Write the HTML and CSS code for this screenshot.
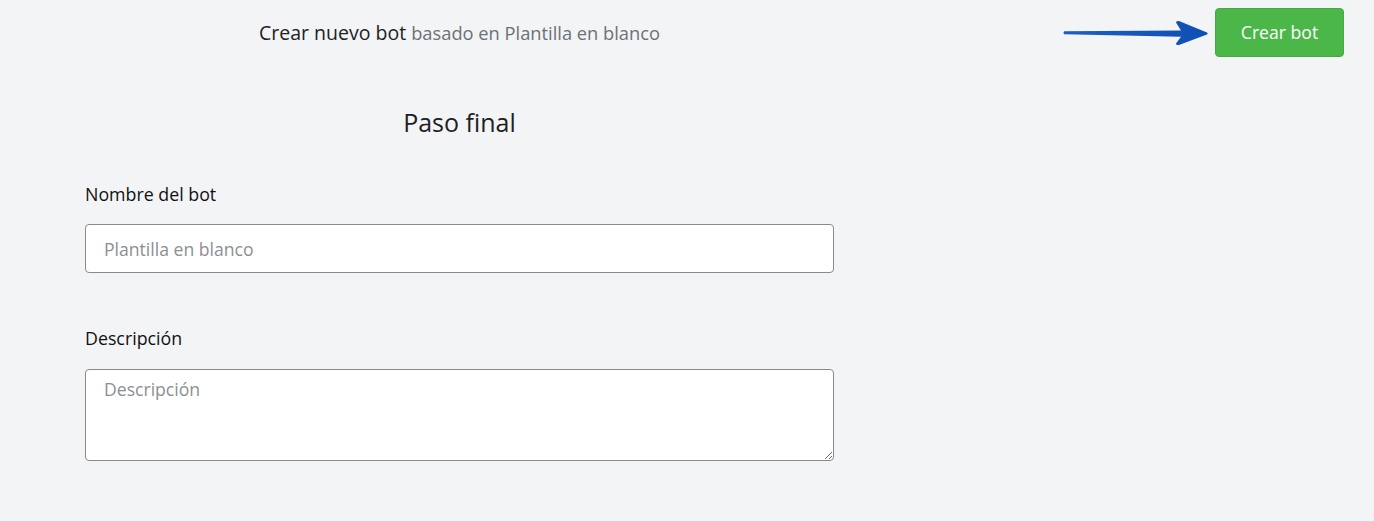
FILE: index.html
```html
<!DOCTYPE html>
<html lang="es">
<head>
<meta charset="utf-8">
<title>Crear nuevo bot</title>
<link rel="stylesheet" href="styles.css">
</head>
<body>
<div class="page">
  <header class="topbar">
    <div class="topbar-title">
      <span class="title-main">Crear nuevo bot</span>
      <span class="title-sub">basado en Plantilla en blanco</span>
    </div>
    <div class="topbar-actions">
      <div class="arrow">
        <svg width="146" height="30" viewBox="0 0 146 30">
          <defs>
            <linearGradient id="ag" x1="0" y1="0" x2="1" y2="0">
              <stop offset="0" stop-color="#1d5fc0"/>
              <stop offset="1" stop-color="#0f4fb5"/>
            </linearGradient>
          </defs>
          <path d="M1 13.2 L118 12.4 L113 4.5 Q113 2.5 116 3 L144 14.5 Q145.5 15.5 144 16.5 L116 27 Q112.8 27.5 113 25.5 L118 18.8 L1 16.2 Q0 14.7 1 13.2 Z" fill="url(#ag)"/>
        </svg>
      </div>
      <button class="btn-create" type="button">Crear bot</button>
    </div>
  </header>

  <main class="form">
    <h1 class="step-title">Paso final</h1>
    <div class="field">
      <label class="field-label" for="name">Nombre del bot</label>
      <input class="field-input" id="name" type="text" placeholder="Plantilla en blanco">
    </div>
    <div class="field">
      <label class="field-label" for="desc">Descripción</label>
      <textarea class="field-textarea" id="desc" placeholder="Descripción"></textarea>
    </div>
  </main>
</div>
</body>
</html>
```

FILE: styles.css
```css
* { box-sizing: border-box; }
html, body {
  margin: 0;
  padding: 0;
  background: #f3f4f6;
  font-family: "Open Sans", "Noto Sans", sans-serif;
  color: #1f1f1f;
}
.page {
  width: 1374px;
  height: 521px;
  padding-left: 85px;
  padding-right: 30px;
}
.topbar {
  display: flex;
  align-items: flex-start;
  justify-content: space-between;
  padding-top: 8px;
}
.topbar-title {
  width: 749px;
  text-align: center;
  padding-top: 12px;
  font-size: 19.5px;
  line-height: 26px;
}
.title-main { color: #222; }
.title-sub { color: #6c7178; font-size: 18.3px; }
.topbar-actions {
  display: flex;
  align-items: flex-start;
}
.arrow {
  margin-top: 10px;
  margin-right: 6px;
  height: 30px;
}
.arrow svg { display: block; }
.btn-create {
  width: 129px;
  height: 49px;
  background: #4cb749;
  border: 1px solid #45a843;
  border-radius: 4px;
  color: #fff;
  font-family: "Open Sans", "Noto Sans", sans-serif;
  font-size: 17.6px;
  padding: 0 0 2px;
  cursor: pointer;
}
.form {
  width: 749px;
}
.step-title {
  margin: 47px 0 0;
  text-align: center;
  font-weight: 400;
  font-size: 25px;
  line-height: 36px;
  color: #1f1f1f;
}
.field {
  display: flex;
  flex-direction: column;
}
.field-label {
  font-size: 17.8px;
  line-height: 24px;
  color: #111;
  margin-top: 42px;
  margin-bottom: 18px;
}
.field + .field .field-label { margin-top: 53px; margin-bottom: 19px; }
.field-input,
.field-textarea {
  width: 749px;
  border: 1px solid #8a8a8a;
  border-radius: 4px;
  background: #fff;
  font-family: "Open Sans", "Noto Sans", sans-serif;
  font-size: 17.6px;
  color: #222;
  padding: 0 18px;
  outline: none;
}
.field-input { height: 49px; }
.field-textarea {
  height: 92px;
  padding-top: 7px;
  resize: vertical;
  display: block;
}
.field-input::placeholder,
.field-textarea::placeholder { color: #8b8f94; }
```
